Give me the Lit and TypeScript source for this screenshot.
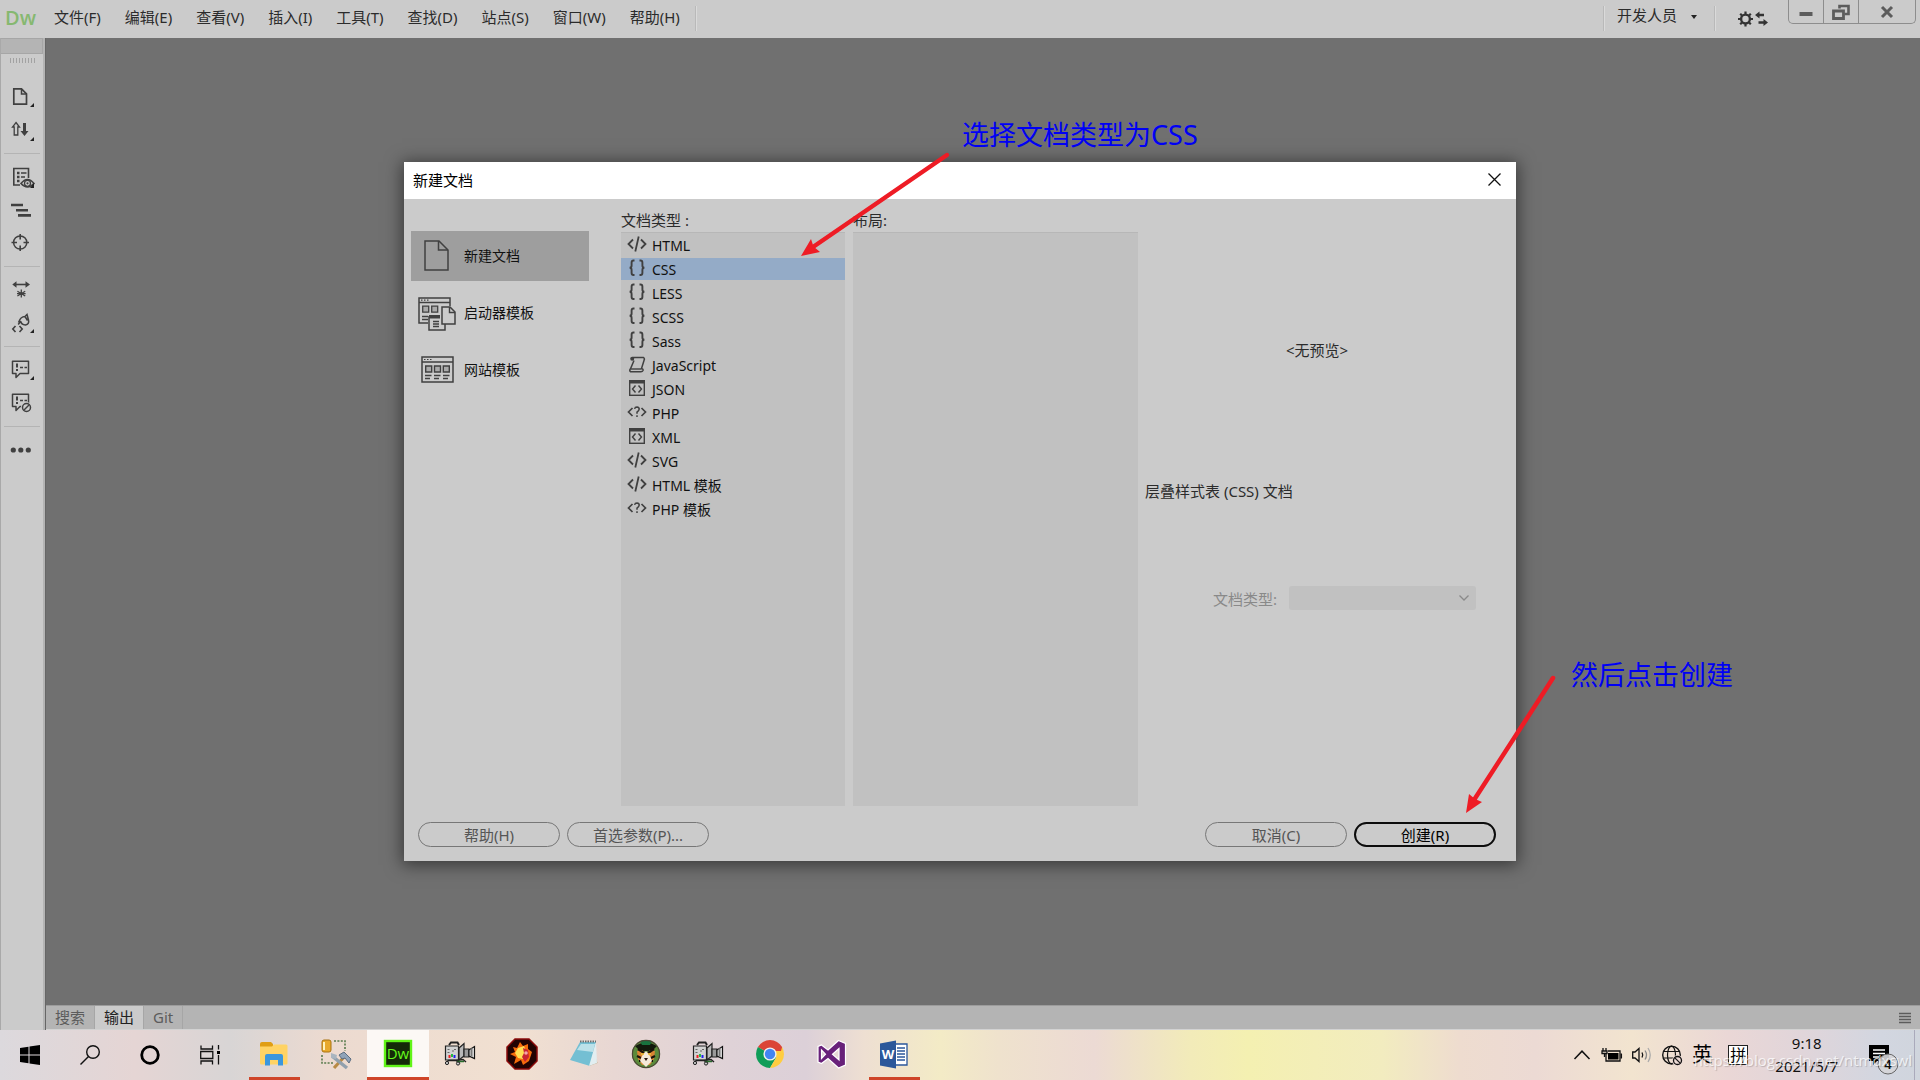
import { LitElement, html, svg, css, type SVGTemplateResult } from "lit";
import { customElement, property, state } from "lit/decorators.js";
import { classMap } from "lit/directives/class-map.js";

const ink = "#404040";

const icon = (w: number, h: number, body: SVGTemplateResult) =>
  html`<svg width=${w} height=${h} viewBox="0 0 ${w} ${h}" fill="none" aria-hidden="true">${body}</svg>`;

/* ---------- document type glyphs, 20x20 ---------- */
const glyphs: Record<string, SVGTemplateResult> = {
  tag: svg`<path d="M6 5.5L1.5 10L6 14.5M14 5.5L18.5 10L14 14.5M11.7 2.5L8.3 17.5" stroke=${ink} stroke-width="1.8"/>`,
  braces: svg`<path d="M7.5 2.5H6.5Q4.6 2.5 4.6 4.5V7.5Q4.6 9.8 2.6 9.8Q4.6 9.8 4.6 12V15Q4.6 17 6.5 17H7.5M12.5 2.5H13.5Q15.4 2.5 15.4 4.5V7.5Q15.4 9.8 17.4 9.8Q15.4 9.8 15.4 12V15Q15.4 17 13.5 17H12.5" stroke=${ink} stroke-width="1.9"/>`,
  scroll: svg`<path d="M5.5 3.5H16.5Q18 4.5 17 6.5L14.5 14.5Q16.5 15 16 16.5Q15.5 17.8 14 17.8H3.5Q2 16.5 3.6 14.5L7 6.5" stroke=${ink} stroke-width="1.5"/><circle cx="5.2" cy="4.8" r="2" fill=${ink}/><path d="M4 15H14.5" stroke=${ink} stroke-width="1.4"/>`,
  box: svg`<rect x="2.7" y="2.7" width="14.6" height="14.6" stroke=${ink} stroke-width="1.4"/><path d="M2 2h16v3.5H2z" fill=${ink}/><path d="M8.5 7.5L5.5 11L8.5 14.5M11.5 7.5L14.5 11L11.5 14.5" stroke=${ink} stroke-width="1.4"/>`,
  query: svg`<path d="M5.5 6L1.5 10L5.5 14M14.5 6L18.5 10L14.5 14" stroke=${ink} stroke-width="1.7"/><path d="M7.6 6.8Q8 5 10 5Q12.3 5.2 12.2 7.2Q12 8.6 10 10.2V11.8M10 13.2V15" stroke=${ink} stroke-width="1.5"/>`,
};

const docTypes: [string, string][] = [
  ["HTML", "tag"], ["CSS", "braces"], ["LESS", "braces"], ["SCSS", "braces"],
  ["Sass", "braces"], ["JavaScript", "scroll"], ["JSON", "box"], ["PHP", "query"],
  ["XML", "box"], ["SVG", "tag"], ["HTML 模板", "tag"], ["PHP 模板", "query"],
];

/* ---------- dialog categories, 38x36 ---------- */
const categories: [string, SVGTemplateResult][] = [
  ["新建文档", svg`<path d="M8 3H22L31 12V32H8Z" stroke=${ink} stroke-width="1.5"/><path d="M21.5 3V12H31" stroke=${ink} stroke-width="1.5"/>`],
  ["启动器模板", svg`<path d="M11 28H2V3H33V11M2 7.5H33" stroke=${ink} stroke-width="1.5"/><path d="M4 5.2h1.5M7 5.2h1.5M10 5.2h1.5" stroke=${ink} stroke-width="1.2"/><path d="M5.7 11.2h6v6h-6zM14.7 11.2h6v6h-6z" fill="#aaa" stroke=${ink} stroke-width="1.3"/><path d="M5 21.5h6M5 24.5h6" stroke=${ink} stroke-width="1.4"/><path d="M12 21V35H28V29" stroke=${ink} stroke-width="1.5"/><path d="M12 20h11v3.5H12z" fill=${ink}/><path d="M16 26.5h6M16 29h6M16 31.5h6" stroke=${ink} stroke-width="1.3"/><path d="M25 12H33L38 17V29H25Z" fill="#cbcbcb" stroke=${ink} stroke-width="1.5"/><path d="M32.5 12V17.5H38" stroke=${ink} stroke-width="1.4"/>`],
  ["网站模板", svg`<path d="M5 5H36V30H5ZM5 10H36" stroke=${ink} stroke-width="1.5"/><path d="M7 7.5h1.5M10 7.5h1.5M13 7.5h1.5" stroke=${ink} stroke-width="1.2"/><path d="M8.7 14h6v6h-6zM17.5 14h6v6h-6zM26.3 14h6v6h-6z" fill="#aaa" stroke=${ink} stroke-width="1.4"/><path d="M8 23.5h6.5M17 23.5h6.5M26 23.5h6.5M8 26.5h5M17 26.5h5M26 26.5h5" stroke=${ink} stroke-width="1.3"/>`],
];

/* ---------- side tools, 26x24 ---------- */
const corner = svg`<path d="M26 18V22H22Z" fill="#222"/>`;
const bubble = svg`<path d="M6 3.2H20.5V15.5H12L8 19.5V15.5H4.5V3.2Z" stroke=${ink} stroke-width="1.5" stroke-linejoin="round"/><path d="M9 5.5V9.5M9 11V13" stroke=${ink} stroke-width="2"/><path d="M12 9.5h3M16.5 9.5h2.5" stroke=${ink} stroke-width="1.4"/>`;
const toolGroups: [string, SVGTemplateResult][][] = [
  [
    ["打开文档", svg`<path d="M5.8 3.8H13.5L18.5 8.8V19.2H5.8Z" stroke=${ink} stroke-width="1.7"/><path d="M13.5 4V9H18.5" stroke=${ink} stroke-width="1.5"/>${corner}`],
    ["文件管理", svg`<path d="M8 4.5L11.5 9H9.8V17H6.200V9H4.5Z" stroke=${ink} stroke-width="1.3"/><path d="M15 5H18V13H20.5L16.5 18L12.5 13H15Z" fill=${ink}/><path d="M26 19V23H22Z" fill="#222"/>`],
  ],
  [
    ["实时视图", svg`<path d="M12 20H5.8V3.5H20.5V13" stroke=${ink} stroke-width="1.6"/><path d="M9 8h2.5M9 12h2.5M9 16h2.5" stroke=${ink} stroke-width="2.4"/><path d="M13 8h5.500M13 12h4" stroke=${ink} stroke-width="1.5"/><path d="M13 18.5Q19.5 10.5 26 18.5Q19.5 25.5 13 18.5Z" fill="#cbcbcb" stroke=${ink} stroke-width="1.6"/><circle cx="19.5" cy="18.3" r="3" stroke=${ink} stroke-width="1.3"/><circle cx="19.5" cy="18.3" r="1.1" fill=${ink}/><path d="M26 18V23H22Z" fill="#222"/>`],
    ["格式化", svg`<path d="M3 7h12M8 12.200h12M10 17.400h13" stroke=${ink} stroke-width="2.6"/>`],
    ["检查", svg`<circle cx="12.2" cy="11.5" r="6.6" stroke=${ink} stroke-width="1.5"/><path d="M12.2 3v5.5M12.2 14.5V20M3.5 11.5H9M15.5 11.5H21" stroke=${ink} stroke-width="1.6"/>`],
  ],
  [
    ["展开", svg`<path d="M7 6.500H19" stroke=${ink} stroke-width="1.6"/><path d="M8.5 3.200V9.800L4.3 6.500ZM17.5 3.200V9.800L22 6.500Z" fill=${ink}/><path d="M13.3 11.500V19.500M9.4 13.200L17.2 18M17.2 13.200L9.4 18M9 15.600h8.6" stroke=${ink} stroke-width="1.3"/>`],
    ["应用注释", svg`<path d="M7.5 15L4.8 18L7.5 21M11.5 15L14.2 18L11.5 21" stroke=${ink} stroke-width="1.6"/><path d="M10.5 11.5Q12.5 5.5 17 5.5L19 3.5L20.5 9Q21.5 13 17.5 14Q13 13.5 13 10.5M17 5.5L19.5 9.5M10.2 13.5L13 10" stroke=${ink} stroke-width="1.5"/>${corner}`],
  ],
  [
    ["注释", svg`${bubble}${corner}`],
    ["删除注释", svg`${bubble}<circle cx="18.5" cy="16.5" r="5.6" fill="#cbcbcb"/><circle cx="18.5" cy="16.5" r="4" stroke=${ink} stroke-width="1.5"/><path d="M15.8 19.2L21.2 13.8" stroke=${ink} stroke-width="1.4"/>`],
  ],
  [["更多", svg`<circle cx="5.3" cy="12" r="2.6" fill=${ink}/><circle cx="12.8" cy="12" r="2.6" fill=${ink}/><circle cx="20.3" cy="12" r="2.6" fill=${ink}/>`]],
];

/* ---------- taskbar apps, 32x32 ---------- */
const camera = svg`<path d="M5 6L7 3.500H13.500L15 6" stroke="#222" stroke-width="2"/><path d="M1.500 7H14.500V21H1.500Z" fill="#d2d2d2" stroke="#222" stroke-width="1.200"/><path d="M15 9L20 4.500V17L15 21Z" fill="#b9b9b9" stroke="#222" stroke-width="1.200"/><path d="M20 10H25V18H20Z" fill="#9a9a9a" stroke="#222" stroke-width="1.200"/><path d="M25 11L30.500 7.500V19.500L25 17Z" fill="#e9e9e9" stroke="#111" stroke-width="1.200"/><path d="M26.500 10L28.500 8.500V18L26.500 17Z" fill="#777"/><path d="M3.500 10.500h2M10 10.500h2M3.500 13.500h2M8 12h2" stroke="#666"/><path d="M4.500 16h2v3h-2z" fill="#e22"/><path d="M7 15h2v3h-2z" fill="#2b4"/><path d="M9.500 16h2v3h-2z" fill="#22e"/><path d="M2 24L4.500 21.500H12L16 24.500M12 21.500L19 20.500L22 23" stroke="#222" stroke-width="1.500"/><path d="M13 22.500H20" stroke="#286c2c" stroke-width="1.500"/><circle cx="3" cy="24" r="1.600" fill="#ccc" stroke="#222"/><circle cx="14" cy="24.500" r="1.600" fill="#ccc" stroke="#222"/>`;
const apps: { name: string; art: SVGTemplateResult; open?: boolean; active?: boolean }[] = [
  { name: "文件资源管理器", open: true, art: svg`<path d="M2 5Q2 3 4 3H13L15 5V9H2Z" fill="#e09e14"/><path d="M2 7.5H14L16 5.5H28Q29.5 5.5 29.5 7V24Q29.5 25.5 28 25.5H3.5Q2 25.5 2 24Z" fill="#ffd364"/><path d="M7 26.5V17Q7 15 9 15H23Q25 15 25 17V26.5H20V21H12V26.5Z" fill="#3b97dd"/>` },
  { name: "数据工具", art: svg`<rect x="2" y="1" width="9" height="12" rx="2" fill="#e8a92c" stroke="#a87310"/><path d="M4 3V11" stroke="#fff3bd" stroke-width="2"/><path d="M14 2H25V12M2 16V24H13" stroke="#587b4c" stroke-width="1.6" stroke-dasharray="2 1.4"/><path d="M14 29L25 17" stroke="#b88a45" stroke-width="3.2"/><path d="M19 16L24 13L31 20L29 24L25 19L22 20Z" fill="#8fa3b8" stroke="#5c6d80"/><path d="M12 17L27 29" stroke="#91a0ad" stroke-width="3.5"/><path d="M11 14V19L16 20L17 16Z" fill="#a9b5bf"/>` },
  { name: "Dreamweaver", open: true, active: true, art: svg`<rect x="3" y="2" width="26" height="25" fill="#142a08" stroke="#61f417" stroke-width="2.4"/><text x="16" y="20" text-anchor="middle" font-family="Open Sans, Noto Sans, sans-serif" font-size="15" fill="#66f71c">Dw</text>` },
  { name: "录像机", art: camera },
  { name: "火焰", art: svg`<path d="M9 0H23L31 8V22L23 30H9L1 22V8Z" fill="#210303" stroke="#8c0b0b" stroke-width="1.5"/><path d="M7 8L11 9L14 3L17 7L22 5L22 10L26 13L23 22L17 26L15 21L8 25L10 18L4 15L9 13Z" fill="#f56b0c"/><path d="M12 9L18 7L20 12L17 20L12 19L9 14Z" fill="#ffdf55"/><path d="M17 9L22 11L23 18L19 23L16 18L18 14Z" fill="#c92433"/><circle cx="20" cy="14" r="1.8" fill="#f4a6a6"/>` },
  { name: "记事本", art: svg`<path d="M23 4L29.5 24L21 27L27 5Z" fill="#b6a078"/><path d="M12 3H28L22 27L2 21Z" fill="#74bfd3"/><path d="M13 5H27L25 13L9 11Z" fill="#bce1e9"/><path d="M28 3L29 24L21 27Z" fill="#e2eef1"/><path d="M12 2.5H28" stroke="#6a6f70" stroke-width="2" stroke-dasharray="1.5 1"/>` },
  { name: "老虎", art: svg`<circle cx="16" cy="15" r="14" fill="#5b8a3a"/><path d="M5 7Q16 0 27 7L22 12H10Z" fill="#121a0c"/><path d="M10 2Q16 0 22 2L20 6H12Z" fill="#18733e"/><path d="M7 12L12 11L16 15L20 11L25 12L24 20L20 26H12L8 20Z" fill="#d98434"/><path d="M8 10L14 14M24 10L18 14M7 17L11 19M25 17L21 19M9 22L12 22M23 22L20 22" stroke="#1a120a" stroke-width="2.2"/><path d="M12 17L16 12L20 17L22 22L16 28L10 22Z" fill="#f5ead8"/><path d="M14 19H18L16 22Z" fill="#2a1710"/><path d="M11 15h3M18 15h3" stroke="#f2c23a" stroke-width="1.6"/><circle cx="16" cy="15" r="13.6" stroke="#4b4736" stroke-width="1.2"/>` },
  { name: "录像机 2", art: camera },
  { name: "Chrome", art: svg`<path d="M16 15L3.9 8A14 14 0 0 1 28.1 8Z" fill="#db4437"/><path d="M16 15L3.9 8A14 14 0 0 0 16 29L22.5 18Z" fill="#0f9d58"/><path d="M16 15L28.1 8A14 14 0 0 1 16 29L22.5 18Z" fill="#ffcd40"/><path d="M16 8H28.1L27 12H16Z" fill="#db4437"/><circle cx="16" cy="15" r="6.6" fill="#f1f1f1"/><circle cx="16" cy="15" r="5.2" fill="#4285f4"/>` },
  { name: "Visual Studio", art: svg`<path d="M22.5 1.5L29.5 4.5V26L22.5 29L12 19.5L5.5 24.5L2 23V7.5L5.5 6L12 11L22.5 1.5ZM23 9.5L16.5 15.2L23 21ZM5.5 11V19.5L9.5 15.2Z" fill="#68217a" stroke="#fff" stroke-width="1.2" fill-rule="evenodd"/>` },
  { name: "Word", open: true, art: svg`<path d="M17 5H29V26H17Z" fill="#fff" stroke="#2b579a" stroke-width="1.3"/><path d="M19 9h8M19 12h8M19 15h8M19 18h8M19 21h8" stroke="#2b579a" stroke-width="1.4"/><path d="M2 4.5L18 1.5V29.5L2 26.5Z" fill="#2b579a"/><text x="10" y="20" text-anchor="middle" font-family="Open Sans, Noto Sans, sans-serif" font-size="13" font-weight="700" fill="#fff">W</text>` },
];

const baseFont = css`
  :host {
    box-sizing: border-box;
    font-family: "Noto Sans", "Noto Sans CJK SC", sans-serif;
    font-size: 15px;
    line-height: 24px;
    color: #2b2b2b;
  }
  * { box-sizing: border-box; }
  button { font: inherit; color: inherit; background: none; border: 0; padding: 0; margin: 0; }
  ul { list-style: none; margin: 0; padding: 0; }
  svg { display: block; flex: none; overflow: visible; }
`;

@customElement("menu-bar")
class MenuBar extends LitElement {
  static styles = [baseFont, css`
    :host { display: flex; height: 38px; background: #cbcbcb; align-items: flex-start; }
    .logo { width: 28px; margin-left: 5px; font: 600 20px/36px "Open Sans", sans-serif; color: #86b870; }
    .menus { display: flex; gap: 24px; padding: 5px 15px 0 21px; }
    .split { width: 2px; height: 25px; margin-top: 6px; background: #b9b9b9; border-right: 1px solid #dadada; }
    .spacer { flex: 1; }
    .role { display: flex; align-items: center; gap: 14px; padding: 3px 17px 0 12px; }
    .sync { padding: 11px 20px 0 22px; }
    .window { display: flex; height: 24px; margin-right: 4px; border: 1px solid #8d8d8d; border-top: 0; border-radius: 0 0 5px 5px; }
    .window button { width: 35px; display: grid; place-items: center; border-right: 1px solid #8d8d8d; }
    .window .close { width: 56px; border: 0; }
  `];

  render() {
    return html`
      <span class="logo">Dw</span>
      <nav class="menus">
        ${["文件(F)", "编辑(E)", "查看(V)", "插入(I)", "工具(T)", "查找(D)", "站点(S)", "窗口(W)", "帮助(H)"]
          .map((m) => html`<button>${m}</button>`)}
      </nav>
      <span class="split"></span>
      <span class="spacer"></span>
      <span class="split"></span>
      <button class="role">开发人员 ${icon(6, 4, svg`<path d="M0 2H6L3 6Z" fill="#222"/>`)}</button>
      <span class="split"></span>
      <button class="sync" aria-label="同步设置">
        ${icon(30, 16, svg`<circle cx="7.5" cy="8" r="4.4" stroke="#333" stroke-width="2.4"/><path d="M7.5 .5V3M7.5 13V15.5M0 8H2.5M12.5 8H15M2.2 2.7L4 4.5M11 11.5L12.8 13.3M12.8 2.7L11 4.5M4 11.5L2.2 13.3" stroke="#333" stroke-width="2.2"/><path d="M17 4L21.5 .5V2.8H26V5.2H21.5V7.5ZM30 11.5L25.5 8V10.3H20.5V12.7H25.5V15Z" fill="#333"/>`)}
      </button>
      <div class="window">
        <button aria-label="最小化">${icon(14, 14, svg`<path d="M.5 9H13.5" stroke="#5c5c5c" stroke-width="4"/>`)}</button>
        <button aria-label="还原">${icon(18, 16, svg`<path d="M7.5 4.5V2H16.5V10H12.5" stroke="#5c5c5c" stroke-width="2.6"/><path d="M1.5 7H11.5V14.5H1.5Z" stroke="#5c5c5c" stroke-width="2.8"/>`)}</button>
        <button class="close" aria-label="关闭">${icon(14, 12, svg`<path d="M2 1L12 11M12 1L2 11" stroke="#5c5c5c" stroke-width="3"/>`)}</button>
      </div>
    `;
  }
}

@customElement("tool-strip")
class ToolStrip extends LitElement {
  static styles = [baseFont, css`
    :host { display: block; width: 45px; background: #cbcbcb; border-left: 1px solid #a9a9a9; border-right: 2px solid #b4b4b4; }
    .head { height: 16px; background: #b4b4b4; border: 1px solid #a6a6a6; border-left: 0; }
    .grip { width: 25px; height: 5px; margin: 4px 0 22px 9px; background: repeating-linear-gradient(90deg, #a2a2a2 0 1px, #cbcbcb 1px 3px); }
    .group { display: flex; flex-direction: column; gap: 9px; padding: 0 7px 11px; }
    .group + .group { border-top: 1px solid #b4b4b4; margin: 0 3px; padding: 11px 4px 11px; }
  `];

  render() {
    return html`
      <div class="head"></div>
      <div class="grip"></div>
      ${toolGroups.map((g) => html`
        <div class="group">
          ${g.map(([name, art]) => html`<button aria-label=${name}>${icon(26, 24, art)}</button>`)}
        </div>`)}
    `;
  }
}

@customElement("new-document-dialog")
class NewDocumentDialog extends LitElement {
  @state() private selected = "CSS";
  @state() private category = "新建文档";

  static styles = [baseFont, css`
    :host { display: block; position: relative; width: 100%; max-width: 1112px; background: #cbcbcb; box-shadow: 0 2px 16px 2px rgba(0, 0, 0, 0.5); }
    .title { display: flex; justify-content: space-between; align-items: center; height: 37px; padding: 0 15px 2px 9px; background: #fff; color: #000; }
    .body { display: flex; padding: 8px 0 0 7px; }
    .nav { display: flex; flex-direction: column; gap: 7px; width: 178px; margin: 24px 32px 0 0; }
    .nav button { display: flex; align-items: center; gap: 9px; height: 50px; padding-left: 6px; font-size: 14px; color: #111; text-align: left; }
    .nav .on { background: #9e9e9e; }
    .col { display: flex; flex-direction: column; width: 224px; margin-right: 8px; }
    .col.wide { width: 285px; margin-right: 0; }
    .label { height: 25px; padding-top: 1px; }
    .list { flex: 1; min-height: 574px; padding-top: 1px; background: #c1c1c1; box-shadow: inset 0 1px #b7b7b7; }
    .list button { display: flex; align-items: flex-start; gap: 5px; width: 100%; height: 24px; padding-left: 6px; font-size: 14px; color: #111; border: solid transparent; border-width: 1px 0; background-clip: padding-box; text-align: left; }
    .list .on { background-color: #94abc7; }
    .preview { flex: 1; display: flex; flex-direction: column; padding: 25px 40px 0 7px; }
    .empty { display: grid; place-items: center; height: 236px; margin-right: -20px; margin-left: -7px; }
    .desc { margin: 11px 0 82px; }
    .field { display: flex; align-items: center; justify-content: flex-end; gap: 12px; color: #898989; }
    .field label { padding-top: 2px; }
    .pick { display: grid; align-items: center; width: 187px; }
    .pick select, .pick svg { grid-area: 1 / 1; }
    .pick svg { justify-self: end; margin-right: 7px; }
    .pick select { appearance: none; height: 24px; border: 0; border-radius: 3px; background: #c1c1c1; opacity: 1; }
    .foot { display: flex; gap: 7px; padding: 16px 20px 14px 14px; }
    .foot button { width: 142px; height: 25px; line-height: 22px; border: 1px solid #777; border-radius: 13px; color: #555; }
    .foot .primary { border: 2px solid #0c0c0c; line-height: 20px; color: #000; }
    .foot span { flex: 1; }
    .marks { position: absolute; left: 0; top: 0; pointer-events: none; }
    .note { position: absolute; font-size: 27px; line-height: 36px; white-space: nowrap; color: #0000f5; }
    .pick-note { left: 558px; top: -45px; }
    .create-note { left: 1167px; top: 495px; }
  `];

  render() {
    return html`
      <div class="title">
        <span>新建文档</span>
        <button aria-label="关闭">${icon(13, 13, svg`<path d="M.5 .5L12.5 12.5M12.5 .5L.5 12.5" stroke="#111" stroke-width="1.3"/>`)}</button>
      </div>
      <div class="body">
        <nav class="nav">
          ${categories.map(([name, art]) => html`
            <button class=${classMap({ on: name === this.category })} @click=${() => (this.category = name)}>
              ${icon(38, 36, art)}${name}
            </button>`)}
        </nav>
        <div class="col">
          <div class="label">文档类型 :</div>
          <ul class="list">
            ${docTypes.map(([name, g]) => html`
              <li><button class=${classMap({ on: name === this.selected })} @click=${() => (this.selected = name)}>
                ${icon(20, 20, glyphs[g])}${name}
              </button></li>`)}
          </ul>
        </div>
        <div class="col wide">
          <div class="label">布局:</div>
          <div class="list"></div>
        </div>
        <div class="preview">
          <div class="empty">&lt;无预览&gt;</div>
          <div class="desc">层叠样式表 (CSS) 文档</div>
          <div class="field">
            <label for="doctype">文档类型:</label>
            <div class="pick">
              <select id="doctype" disabled></select>
              ${icon(10, 6, svg`<path d="M.5 .5L5 5L9.5 .5" stroke="#8a8a8a" stroke-width="1.3"/>`)}
            </div>
          </div>
        </div>
      </div>
      <div class="foot">
        <button>帮助(H)</button>
        <button>首选参数(P)...</button>
        <span></span>
        <button>取消(C)</button>
        <button class="primary">创建(R)</button>
      </div>
      <svg class="marks" width="1" height="1" aria-hidden="true">
        <g stroke="#ee1c25" stroke-width="4.5" stroke-linecap="round">
          <path d="M543 -7L409 85"/>
          <path d="M1149 516L1070 638"/>
        </g>
        <g fill="#ee1c25">
          <path d="M397 94L407 77L409.5 84.5L416 90Z"/>
          <path d="M1062 651L1065 632L1071 637L1078 640Z"/>
        </g>
      </svg>
      <div class="note pick-note">选择文档类型为CSS</div>
      <div class="note create-note">然后点击创建</div>
    `;
  }
}

@customElement("output-tabs")
class OutputTabs extends LitElement {
  @state() private current = "输出";

  static styles = [baseFont, css`
    :host { display: flex; align-items: center; height: 25px; background: #b4b4b4; border-top: 1px solid #9c9c9c; border-bottom: 1px solid #d2d2d2; }
    button { height: 23px; padding: 0 9px; border-right: 1px solid #a6a6a6; color: #5c5c5c; line-height: 23px; }
    .on { background: #cbcbcb; color: #222; }
    .menu { margin-left: auto; border: 0; padding: 0 9px; }
  `];

  render() {
    return html`
      ${["搜索", "输出", "Git"].map((t) => html`
        <button class=${classMap({ on: t === this.current })} @click=${() => (this.current = t)}>${t}</button>`)}
      <button class="menu" aria-label="面板菜单">${icon(12, 10, svg`<path d="M0 .5H12M0 3.5H12M0 6.5H12M0 9.5H12" stroke="#5c5c5c" stroke-width="1.4"/>`)}</button>
    `;
  }
}

@customElement("task-bar")
class TaskBar extends LitElement {
  @property() time = "9:18";
  @property() date = "2021/5/7";

  static styles = [baseFont, css`
    :host {
      display: flex; position: relative; height: 50px; color: #111;
      background: linear-gradient(90deg, #dcd9dd 0%, #e5d5d4 7%, #d8d5d5 12%, #ecdad0 17%, #f1e0d1 27%, #e8d7d3 32%, #dfd2d7 38%, #dcd0d8 42%, #eedfd2 45%, #f3ebc6 49%, #efe2cd 52%, #ecdad4 57%, #f2ebb9 62%, #f4f0b1 65%, #f2ecbf 72%, #eedccf 76%, #ecdad4 80%, #f2e4cf 85%, #ead7d6 90%, #e0d5da 94%, #d2d6e0 98%, #d0d5dd 100%);
    }
    .sys { display: grid; place-items: center; width: 60px; }
    .apps { display: flex; padding-left: 3px; }
    .app { display: flex; flex-direction: column; align-items: center; justify-content: space-between; width: 62px; padding-top: 9px; }
    .app.active { background: #fcf8f5; }
    .bar { width: 51px; height: 3px; background: #cf4529; }
    .active .bar { width: 100%; }
    .tray { display: flex; align-items: center; margin-left: auto; }
    .tray button { display: grid; place-items: center; }
    .tray .glyph { width: 30px; }
    .tray .ime { width: 30px; font-size: 20px; color: #000; }
    .pinyin { width: 20px; height: 20px; margin: 0 27px 0 11px; background: #fff; border: 1px solid #222; font-size: 16px; line-height: 18px; color: #000; }
    .clock { display: flex; flex-direction: column; align-items: center; line-height: 23px; }
    .notice { margin: 0 25px 0 31px; }
    .edge { width: 6px; height: 50px; border-left: 1px solid #aab; }
    .url { position: absolute; right: 8px; top: 19px; font: 15px/22px "Open Sans", sans-serif; color: rgba(255, 255, 255, 0.75); text-shadow: 1px 1px 1px rgba(0, 0, 0, 0.18); pointer-events: none; }
  `];

  render() {
    return html`
      <button class="sys" aria-label="开始">${icon(20, 20, svg`<path d="M0 3L8.5 1.8V9.5H0ZM9.5 1.6L20 0V9.5H9.5ZM0 10.5H8.5V18.2L0 17ZM9.5 10.5H20V20L9.5 18.4Z" fill="#000"/>`)}</button>
      <button class="sys" aria-label="搜索">${icon(20, 20, svg`<circle cx="13" cy="7" r="6.3" stroke="#111" stroke-width="1.4"/><path d="M8.5 11.5L.5 19.5" stroke="#111" stroke-width="1.5"/>`)}</button>
      <button class="sys" aria-label="Cortana">${icon(20, 20, svg`<circle cx="10" cy="10" r="8.3" stroke="#000" stroke-width="2.8"/>`)}</button>
      <button class="sys" aria-label="任务视图">${icon(20, 20, svg`<path d="M1 .5V4H12.5V.5M1 19.5V16H12.5V19.5M.7 6.5H12.8V13.5H.7Z M18.5 0V4.5M18.5 10V19.5" stroke="#111" stroke-width="1.3"/><path d="M17 6h3v3h-3z" fill="#000"/>`)}</button>
      <div class="apps">
        ${apps.map((a) => html`
          <button class=${classMap({ app: true, active: !!a.active })} aria-label=${a.name}>
            ${icon(32, 32, a.art)}
            ${a.open ? html`<span class="bar"></span>` : ""}
          </button>`)}
      </div>
      <div class="tray">
        <button class="glyph" aria-label="隐藏的图标">${icon(16, 10, svg`<path d="M.5 9L8 1.2L15.5 9" stroke="#111" stroke-width="1.5"/>`)}</button>
        <button class="glyph" aria-label="电池">${icon(20, 14, svg`<path d="M4 6V13H18V3H6" stroke="#111" stroke-width="1.3"/><path d="M6 5H16.5V11.5H6Z" fill="#000"/><path d="M19.3 5.5V10.5" stroke="#111" stroke-width="1.5"/><path d="M1 0V2.5M4 0V2.5M0 3H5V5.5H0ZM2.5 5V9" stroke="#111" stroke-width="1.3"/>`)}</button>
        <button class="glyph" aria-label="音量">${icon(20, 18, svg`<path d="M.7 6H3L7 2.5V15.5L3 12H.7Z" stroke="#111" stroke-width="1.3"/><path d="M10 6.5Q11.5 9 10 11.5" stroke="#111" stroke-width="1.3"/><path d="M13 4.5Q16 9 13 13.5" stroke="#888" stroke-width="1.3"/><path d="M16 2Q20.5 9 16 16" stroke="#aaa" stroke-width="1.3"/>`)}</button>
        <button class="glyph" aria-label="网络">${icon(20, 20, svg`<circle cx="9.5" cy="10" r="8.8" stroke="#111" stroke-width="1.4"/><ellipse cx="9.5" cy="10" rx="4" ry="8.8" stroke="#111" stroke-width="1.2"/><path d="M1.5 6.5H17.5M1.5 13H13" stroke="#111" stroke-width="1.2"/><circle cx="15.5" cy="15.5" r="5.4" fill="#ecd9d4"/><circle cx="15.5" cy="15.5" r="4" stroke="#111" stroke-width="1.3"/><path d="M12.8 12.8L18.2 18.2" stroke="#111" stroke-width="1.2"/>`)}</button>
        <button class="ime">英</button>
        <button class="pinyin">拼</button>
        <button class="clock"><span>${this.time}</span><span>${this.date}</span></button>
        <button class="notice" aria-label="通知">${icon(20, 20, svg`<path d="M0 0H20V16H8L4 20V16H0Z" fill="#000"/><path d="M4 5h12M4 8.5h12M4 12h6" stroke="#fff" stroke-width="1.3"/><circle cx="19" cy="19" r="10" fill="#d5d5d8" fill-opacity=".9" stroke="#666"/><text x="19" y="24" text-anchor="middle" font-family="Noto Sans, sans-serif" font-size="13" font-weight="600" fill="#111">4</text>`)}</button>
        <span class="edge"></span>
      </div>
      <span class="url">https://blog.csdn.net/ntmdxswl</span>
    `;
  }
}

@customElement("app-root")
class AppRoot extends LitElement {
  static styles = css`
    :host { display: flex; flex-direction: column; position: relative; min-height: 100vh; background: #707070; overflow: hidden; }
    .work { flex: 1; display: flex; }
    .canvas { flex: 1; display: flex; flex-direction: column; justify-content: flex-end; border-left: 1px solid #666; }
    .layer { position: absolute; inset: 162px 0 auto; display: flex; justify-content: center; }
  `;

  render() {
    return html`
      <menu-bar></menu-bar>
      <div class="work">
        <tool-strip></tool-strip>
        <main class="canvas"><output-tabs></output-tabs></main>
      </div>
      <task-bar></task-bar>
      <div class="layer"><new-document-dialog></new-document-dialog></div>
    `;
  }
}
